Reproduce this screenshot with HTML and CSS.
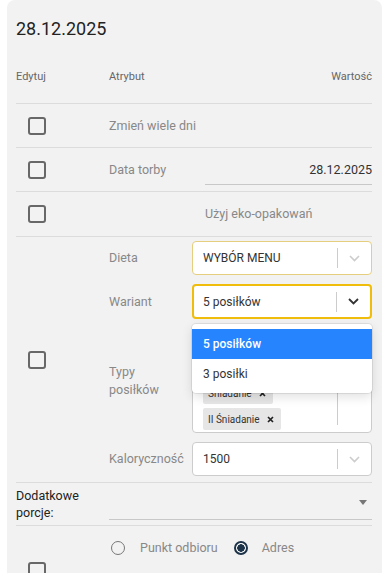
FILE: index.html
```html
<!DOCTYPE html>
<html>

<head>
    <title>Dzień</title>
    <link rel="stylesheet" href="styles.css">
</head>

<body>
    <div class="card">
        <h1 class="day-title">28.12.2025</h1>

        <div class="head-row">
            <span>Edytuj</span>
            <span>Atrybut</span>
            <span class="right">Wartość</span>
        </div>

        <div class="row">
            <div class="edit"><span class="checkbox"></span></div>
            <div class="attr">Zmień wiele dni</div>
            <div></div>
        </div>

        <div class="row">
            <div class="edit"><span class="checkbox"></span></div>
            <div class="attr">Data torby</div>
            <div class="date-input">28.12.2025</div>
        </div>

        <div class="row row-eko">
            <div class="edit"><span class="checkbox"></span></div>
            <div></div>
            <div class="attr">Użyj eko-opakowań</div>
        </div>

        <div class="row">
            <div class="edit"><span class="checkbox"></span></div>
            <div class="fields">
                <div class="field">
                    <div class="attr">Dieta</div>
                    <div class="select select-soft">
                        <div class="select-value upper">WYBÓR MENU</div>
                        <span class="sep"></span>
                        <span class="indicator">
                            <svg width="11" height="7" viewBox="0 0 11 7"><path d="M1 1l4.5 4.5L10 1" fill="none" stroke="#cccccc" stroke-width="1.6"/></svg>
                        </span>
                    </div>
                </div>

                <div class="field">
                    <div class="attr">Wariant</div>
                    <div class="select select-focus">
                        <div class="select-value">5 posiłków</div>
                        <span class="sep"></span>
                        <span class="indicator">
                            <svg width="11" height="7" viewBox="0 0 11 7"><path d="M1 1l4.5 4.5L10 1" fill="none" stroke="#333333" stroke-width="1.8"/></svg>
                        </span>
                        <div class="menu">
                            <div class="option active">5 posiłków</div>
                            <div class="option">3 posiłki</div>
                        </div>
                    </div>
                </div>

                <div class="field">
                    <div class="attr two-line">Typy<br>posiłków</div>
                    <div class="select multi">
                        <div class="tags">
                            <span class="tag">Obiad <svg class="x" width="7" height="7" viewBox="0 0 7 7"><path d="M1 1l5 5M6 1L1 6" stroke="#222" stroke-width="1.7"/></svg></span>
                            <span class="tag">Kolacja <svg class="x" width="7" height="7" viewBox="0 0 7 7"><path d="M1 1l5 5M6 1L1 6" stroke="#222" stroke-width="1.7"/></svg></span>
                            <span class="tag">Podwieczorek <svg class="x" width="7" height="7" viewBox="0 0 7 7"><path d="M1 1l5 5M6 1L1 6" stroke="#222" stroke-width="1.7"/></svg></span>
                            <span class="tag">Śniadanie <svg class="x" width="7" height="7" viewBox="0 0 7 7"><path d="M1 1l5 5M6 1L1 6" stroke="#222" stroke-width="1.7"/></svg></span>
                            <span class="tag">II Śniadanie <svg class="x" width="7" height="7" viewBox="0 0 7 7"><path d="M1 1l5 5M6 1L1 6" stroke="#222" stroke-width="1.7"/></svg></span>
                        </div>
                        <span class="sep sep-tall"></span>
                        <span class="indicator"></span>
                    </div>
                </div>

                <div class="field">
                    <div class="attr">Kaloryczność</div>
                    <div class="select">
                        <div class="select-value">1500</div>
                        <span class="sep"></span>
                        <span class="indicator">
                            <svg width="11" height="7" viewBox="0 0 11 7"><path d="M1 1l4.5 4.5L10 1" fill="none" stroke="#cccccc" stroke-width="1.6"/></svg>
                        </span>
                    </div>
                </div>
            </div>
        </div>

        <div class="row row-extra">
            <div class="extra-label">Dodatkowe<br>porcje:</div>
            <div class="line-select"><span class="caret"></span></div>
        </div>

        <div class="row row-delivery">
            <div class="edit"><span class="checkbox"></span></div>
            <div class="delivery">
                <label class="radio-item"><span class="radio"></span>Punkt odbioru</label>
                <label class="radio-item"><span class="radio checked"></span>Adres</label>
            </div>
        </div>
    </div>
</body>

</html>
```

FILE: styles.css
```css
body {
    margin: 0;
    background-color: white;
    font-family: Roboto, "Liberation Sans", sans-serif;
    color: #333;
    overflow: hidden;
}

.card {
    margin: 0 5px 0 7px;
    padding: 17px 10px 0 9px;
    background-color: #f2f2f2;
    border-radius: 8px 8px 0 0;
    min-height: 700px;
}

.day-title {
    margin: 0 0 29px;
    font-size: 18px;
    line-height: 24px;
    font-weight: normal;
    color: #222;
}

.head-row,
.row {
    display: grid;
    grid-template-columns: 93px 96px 1fr;
    border-bottom: 1px solid #dcdcdc;
}

.head-row {
    font-size: 11px;
    line-height: 14px;
    color: #666;
    padding-bottom: 19px;
}

.right {
    text-align: right;
}

.row {
    min-height: 43px;
    align-items: center;
    font-size: 12.5px;
}

.row-eko {
    min-height: 44px;
}

.edit {
    padding-left: 12px;
}

.checkbox {
    display: block;
    width: 18px;
    height: 18px;
    box-sizing: border-box;
    border: 2px solid #686868;
    border-radius: 3px;
}

.attr {
    color: #888;
    line-height: 18px;
}

.date-input {
    height: 30px;
    box-sizing: border-box;
    border-bottom: 1px solid #c8c8c8;
    text-align: right;
    line-height: 30px;
    color: #333;
}

.fields {
    grid-column: 2 / 4;
    display: flex;
    flex-direction: column;
    gap: 9px;
    padding: 4px 0 6px;
}

.field {
    display: grid;
    grid-template-columns: 83px 1fr;
    align-items: center;
}

.select {
    position: relative;
    display: flex;
    align-items: center;
    height: 34px;
    box-sizing: border-box;
    background-color: white;
    border: 1px solid #cccccc;
    border-radius: 4px;
    font-size: 12px;
    color: #333;
}

.select-soft {
    border-color: #e5cf7e;
}

.select-focus {
    height: 35px;
    border: 2px solid #f0bd0c;
}

.select-focus .select-value {
    padding-left: 9px;
}

.select-value {
    flex: 1;
    padding-left: 10px;
}

.sep {
    width: 1px;
    height: 20px;
    background-color: #cccccc;
}

.indicator {
    width: 33px;
    display: flex;
    justify-content: center;
    align-items: center;
}

.menu {
    position: absolute;
    top: calc(100% + 7px);
    left: -2px;
    right: -2px;
    padding: 5px 0 4px;
    background-color: white;
    border-radius: 4px;
    box-shadow: 0 0 0 1px rgba(0, 0, 0, 0.08), 0 4px 11px rgba(0, 0, 0, 0.12);
    z-index: 5;
}

.option {
    height: 30px;
    line-height: 31px;
    padding-left: 11px;
    color: #333;
}

.option.active {
    background-color: #2684ff;
    color: white;
    font-weight: 500;
}

.multi {
    height: 105px;
    align-items: stretch;
}

.tags {
    flex: 1;
    display: flex;
    flex-wrap: wrap;
    align-content: flex-end;
    gap: 4px;
    padding: 0 6px 2px 10px;
}

.tag {
    display: flex;
    align-items: center;
    height: 22px;
    padding: 0 7px 0 5px;
    background-color: #e6e6e6;
    border-radius: 2px;
    font-size: 10px;
    color: #333;
}

.tag .x {
    margin-left: 7px;
}

.sep-tall {
    height: auto;
    margin: 8px 0 7px;
}

.row-extra {
    grid-template-columns: 93px 1fr;
    min-height: 42px;
}

.extra-label {
    font-size: 12.5px;
    line-height: 17px;
    color: #222;
}

.line-select {
    position: relative;
    height: 30px;
    margin-top: 1px;
    border-bottom: 1px solid #c8c8c8;
}

.caret {
    position: absolute;
    right: 5px;
    top: 11px;
    border-left: 4px solid transparent;
    border-right: 4px solid transparent;
    border-top: 5px solid #777;
}

.row-delivery {
    min-height: 90px;
    border-bottom: none;
}

.delivery {
    grid-column: 2 / 4;
    align-self: start;
    display: flex;
    align-items: center;
    padding: 12px 0 0 2px;
    line-height: 20px;
    color: #888;
}

.radio-item {
    display: flex;
    align-items: center;
    margin-right: 16px;
}

.radio {
    width: 14px;
    height: 14px;
    box-sizing: border-box;
    border: 1.5px solid #777;
    border-radius: 50%;
    margin-right: 15px;
}

.radio.checked {
    border: 2px solid #1d3349;
    background: radial-gradient(circle, #1d3349 0 3.5px, white 4px);
    margin-right: 14px;
}
```
